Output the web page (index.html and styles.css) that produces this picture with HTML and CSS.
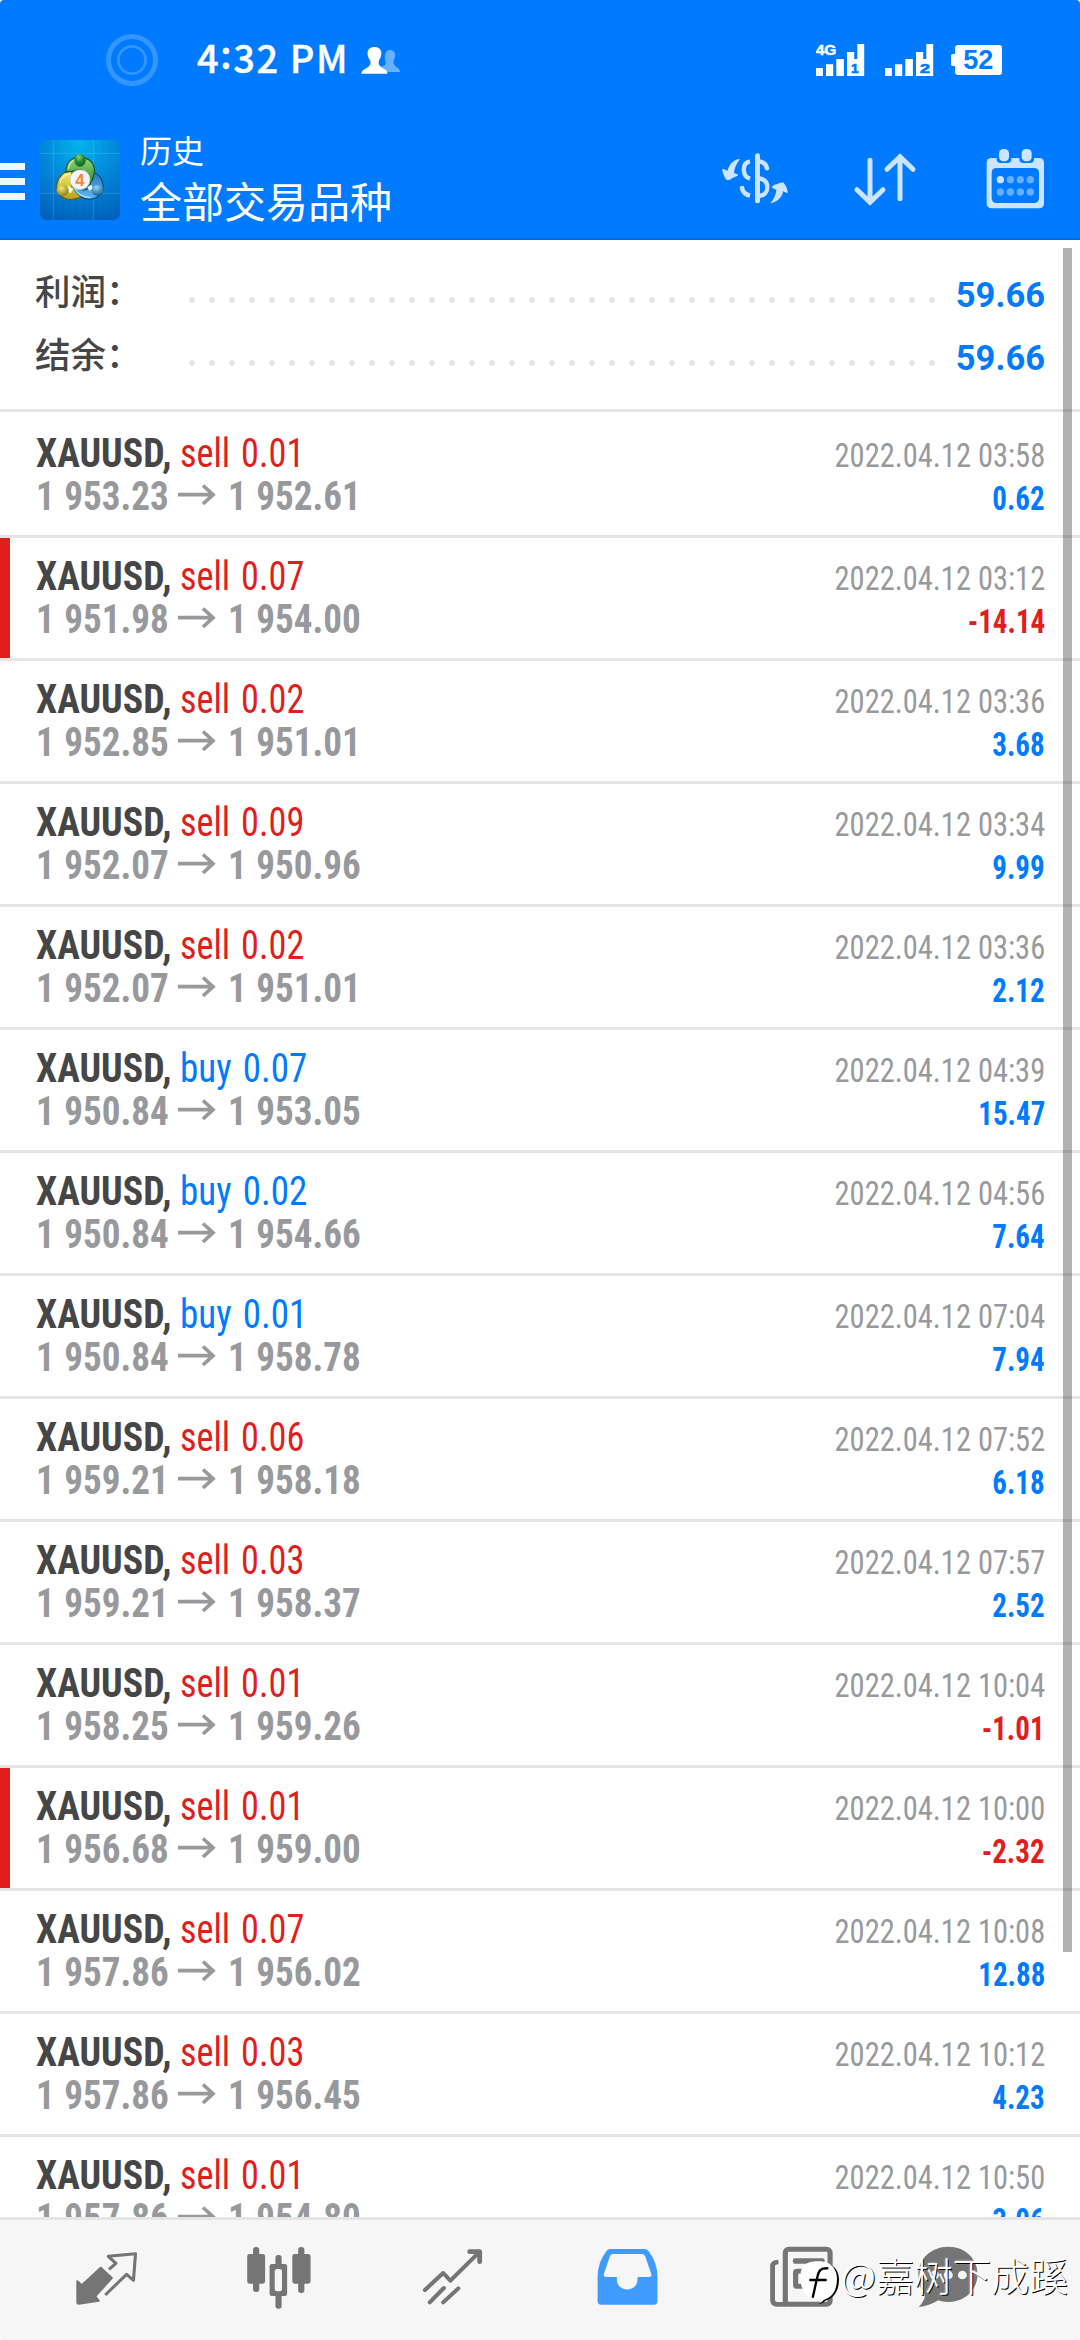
FILE: index.html
```
<!DOCTYPE html>
<html lang="zh-CN">
<head>
<meta charset="utf-8">
<title>历史</title>
<link rel="stylesheet" href="styles.css">
</head>
<body>
<div class="screen">
<header class="header">
  <div class="status">
    <svg class="ring" viewBox="0 0 54 54"><circle cx="27" cy="27" r="23.5" stroke-width="5"/><circle cx="27" cy="27" r="13.6" stroke-width="2.8"/></svg>
    <span class="clock">4<i>:</i>32 PM</span>
    <svg class="people" viewBox="1050 138 116 84" preserveAspectRatio="none">
      <path fill="#66b0ff" d="M1133 150C1143 150 1149 156 1149 165C1149 176 1144 180 1144 188C1145 200 1163 202 1164 216H1104V200C1124 198 1122 192 1121 186C1118 176 1117 150 1133 150Z"/>
      <path fill="#fff" d="M1089 141C1102 141 1109 148 1109 160C1109 173 1102 178 1101 188C1101 205 1126 203 1127 221H1051C1052 203 1078 205 1078 188C1077 178 1069 174 1069 160C1069 148 1076 141 1089 141Z"/>
    </svg>
    <svg class="signal signal-1" viewBox="801 126 142 102" preserveAspectRatio="none">
      <path fill="#fff" d="M801 201h20v24h-20zM830 190h21v35h-21zM860 174h22v51h-22zM891 153h21v21h9V129h20v96h-50z"/>
      <text class="net" x="800" y="162" textLength="60" lengthAdjust="spacingAndGlyphs">4G</text>
      <text class="sim" x="903" y="216" textLength="22" lengthAdjust="spacingAndGlyphs">1</text>
    </svg>
    <svg class="signal signal-2" viewBox="801 126 142 102" preserveAspectRatio="none">
      <path fill="#fff" d="M801 201h20v24h-20zM830 190h21v35h-21zM860 174h22v51h-22zM891 153h21v21h9V129h20v96h-50z"/>
      <text class="sim" x="903" y="216" textLength="29" lengthAdjust="spacingAndGlyphs">2</text>
    </svg>
    <div class="battery">52</div>
  </div>
  <div class="toolbar">
    <div class="menu"><b></b><b></b><b></b></div>
    <svg class="logo" viewBox="120 60 240 240">
      <defs>
        <radialGradient id="bg" cx=".5" cy=".05" r="1"><stop offset="0" stop-color="#02b4ea"/><stop offset=".45" stop-color="#0289dc"/><stop offset="1" stop-color="#0160ba"/></radialGradient>
        <linearGradient id="g" x1="0" y1="0" x2="0" y2="1"><stop offset="0" stop-color="#9ad679"/><stop offset="1" stop-color="#238327"/></linearGradient>
        <linearGradient id="y" x1="0" y1="0" x2="0" y2="1"><stop offset="0" stop-color="#f4ec6a"/><stop offset="1" stop-color="#b4a31a"/></linearGradient>
        <linearGradient id="b" x1="0" y1="0" x2="0" y2="1"><stop offset="0" stop-color="#2678bd"/><stop offset="1" stop-color="#5cbaf0"/></linearGradient>
        <radialGradient id="gh" cx=".4" cy=".25" r=".8"><stop offset="0" stop-color="#8ed27c"/><stop offset=".5" stop-color="#278a34"/><stop offset="1" stop-color="#155c20"/></radialGradient>
        <radialGradient id="yh" cx=".4" cy=".3" r=".8"><stop offset="0" stop-color="#f5ea78"/><stop offset="1" stop-color="#7d6d0a"/></radialGradient>
        <radialGradient id="bh" cx=".4" cy=".25" r=".8"><stop offset="0" stop-color="#8fd4f7"/><stop offset="1" stop-color="#0f578f"/></radialGradient>
      </defs>
      <rect x="120" y="60" width="240" height="240" rx="21" fill="url(#bg)"/>
      <path d="M160 60V300M280 60V300M120 100H360M120 220H360" stroke="#7fdcff" stroke-opacity=".36" stroke-width="2"/>
      <path d="M180 60V300M200 60V300M220 60V300M240 60V300M260 60V300M300 60V300M320 60V300M340 60V300M120 120H360M120 140H360M120 160H360M120 180H360M120 200H360M120 240H360M120 260H360" stroke="#7fdcff" stroke-opacity=".08" stroke-width="2"/>
      <path d="M216 153C178 154 166 190 172 213C186 240 214 244 242 232L228 198L216 200Z" fill="url(#y)" stroke="#6a5c0a" stroke-width="3.5"/>
      <path d="M264 156C298 156 310 180 310 210C298 240 260 244 242 228C228 220 222 210 222 198C246 214 264 214 270 196Z" fill="url(#b)" stroke="#114a7c" stroke-width="3.5"/>
      <path d="M197 156C198 124 218 112 240 112C270 112 288 134 282 162C280 180 272 190 262 198L258 160L242 148L216 154Z" fill="url(#g)" stroke="#145519" stroke-width="3.5"/>
      <path d="M206 145C208 130 216 122 226 119M181 187C184 172 194 164 208 162" fill="none" stroke="#fff" stroke-opacity=".55" stroke-width="4" stroke-linecap="round"/>
      <path d="M203 196L219 208L212 220L203 214ZM262 202L274 194L279 206L268 212Z" fill="#f5faf0"/>
      <path d="M224 206C232 222 250 232 270 232" fill="none" stroke="#a5dcff" stroke-width="4" stroke-linecap="round"/>
      <ellipse cx="240" cy="121" rx="17" ry="19" fill="url(#gh)"/>
      <ellipse cx="188" cy="211" rx="18" ry="17" fill="url(#yh)"/>
      <ellipse cx="293" cy="211" rx="18" ry="17" fill="url(#bh)"/>
      <circle cx="240" cy="179" r="30" fill="#f5f4f5" stroke="#b9c6cf" stroke-width="2"/>
      <text class="four" x="240" y="197" text-anchor="middle">4</text>
    </svg>
    <div class="titles"><div class="t1">历史</div><div class="t2">全部交易品种</div></div>
    <svg class="act currency" viewBox="60 51 210 180" fill="none" stroke="#cce4ff" stroke-width="13">
      <path d="M172.500 77V212.500" stroke-width="15" stroke-linecap="round"/>
      <path d="M150 94C138 96 131.500 106 131.500 119C131.500 132 138 142 150 146"/>
      <path d="M150 197C137 194 128 185 126 174" /><circle cx="126" cy="174" r="7" fill="#cce4ff" stroke="none"/>
      <path d="M178 94C191 96 199 104 201 115"/><circle cx="201" cy="115" r="6.500" fill="#cce4ff" stroke="none"/>
      <path d="M178 145C193 148 202 158 202 172C202 186 193 196 178 198"/>
      <path fill="#cce4ff" stroke="none" d="M120 87C101 88 87 103 83 122L68 116C65 119 69 135 79 149C83 151 86 150 90 149C98 143 108 141 115 136C114 132 108 131 102 129C103 114 110 99 120 87ZM211 220C230 217 247 203 249 184L262 190C265 187 261 170 251 158C247 157 241 157 237 160C230 163 221 164 215 171C217 175 223 177 229 179C228 194 221 208 211 220Z"/>
    </svg>
    <svg class="act sort" viewBox="456 51 198 180" fill="none" stroke="#cce4ff" stroke-width="15" stroke-linecap="round" stroke-linejoin="miter"><path d="M510 91V215M471 179L510 217L549 179M600 206V82M561 118L600 80L639 118"/></svg>
    <svg class="act calendar" viewBox="855 51 186 192">
      <rect x="860" y="84" width="172" height="151" rx="14" fill="#cce4ff"/>
      <rect x="875" y="114" width="142" height="105" rx="14" fill="#007aff"/>
      <path fill="#007aff" d="M890 84H934V88Q934 99 922 99H902Q890 99 890 88ZM958 84H1002V88Q1002 99 990 99H970Q958 99 958 88Z"/>
      <rect x="897" y="57" width="30" height="37" rx="13" fill="#cce4ff"/><rect x="965" y="57" width="30" height="37" rx="13" fill="#cce4ff"/>
      <g fill="#66afff"><circle cx="901" cy="149" r="11" fill="#cce4ff"/><circle cx="931" cy="149" r="11"/><circle cx="961" cy="149" r="11"/><circle cx="991" cy="149" r="11"/><circle cx="901" cy="186" r="11"/><circle cx="931" cy="186" r="11"/><circle cx="961" cy="186" r="11"/><circle cx="991" cy="186" r="11"/></g>
    </svg>
  </div>
</header>
<main class="content">
  <section class="summary">
    <div class="sum"><span class="label">利润：</span><span class="dots"></span><span class="total">59.66</span></div>
    <div class="sum"><span class="label">结余：</span><span class="dots"></span><span class="total">59.66</span></div>
  </section>
  <svg class="defs"><symbol id="arrow" viewBox="0 0 38 22"><path d="M0 10.700H36M25 1.500L35 10.700L25 20" fill="none" stroke="#97999d" stroke-width="3.700"/></symbol></svg>
  <section class="deals">
    <div class="deal"><div class="line"><b class="sym">XAUUSD,</b><span class="sell">sell 0.01</span><time>2022.04.12 03:58</time></div><div class="line"><b class="num">1 953.23</b><svg class="to"><use href="#arrow"/></svg><b class="num">1 952.61</b><span class="profit">0.62</span></div></div>
    <div class="deal stop"><div class="line"><b class="sym">XAUUSD,</b><span class="sell">sell 0.07</span><time>2022.04.12 03:12</time></div><div class="line"><b class="num">1 951.98</b><svg class="to"><use href="#arrow"/></svg><b class="num">1 954.00</b><span class="profit loss">-14.14</span></div></div>
    <div class="deal"><div class="line"><b class="sym">XAUUSD,</b><span class="sell">sell 0.02</span><time>2022.04.12 03:36</time></div><div class="line"><b class="num">1 952.85</b><svg class="to"><use href="#arrow"/></svg><b class="num">1 951.01</b><span class="profit">3.68</span></div></div>
    <div class="deal"><div class="line"><b class="sym">XAUUSD,</b><span class="sell">sell 0.09</span><time>2022.04.12 03:34</time></div><div class="line"><b class="num">1 952.07</b><svg class="to"><use href="#arrow"/></svg><b class="num">1 950.96</b><span class="profit">9.99</span></div></div>
    <div class="deal"><div class="line"><b class="sym">XAUUSD,</b><span class="sell">sell 0.02</span><time>2022.04.12 03:36</time></div><div class="line"><b class="num">1 952.07</b><svg class="to"><use href="#arrow"/></svg><b class="num">1 951.01</b><span class="profit">2.12</span></div></div>
    <div class="deal"><div class="line"><b class="sym">XAUUSD,</b><span class="buy">buy 0.07</span><time>2022.04.12 04:39</time></div><div class="line"><b class="num">1 950.84</b><svg class="to"><use href="#arrow"/></svg><b class="num">1 953.05</b><span class="profit">15.47</span></div></div>
    <div class="deal"><div class="line"><b class="sym">XAUUSD,</b><span class="buy">buy 0.02</span><time>2022.04.12 04:56</time></div><div class="line"><b class="num">1 950.84</b><svg class="to"><use href="#arrow"/></svg><b class="num">1 954.66</b><span class="profit">7.64</span></div></div>
    <div class="deal"><div class="line"><b class="sym">XAUUSD,</b><span class="buy">buy 0.01</span><time>2022.04.12 07:04</time></div><div class="line"><b class="num">1 950.84</b><svg class="to"><use href="#arrow"/></svg><b class="num">1 958.78</b><span class="profit">7.94</span></div></div>
    <div class="deal"><div class="line"><b class="sym">XAUUSD,</b><span class="sell">sell 0.06</span><time>2022.04.12 07:52</time></div><div class="line"><b class="num">1 959.21</b><svg class="to"><use href="#arrow"/></svg><b class="num">1 958.18</b><span class="profit">6.18</span></div></div>
    <div class="deal"><div class="line"><b class="sym">XAUUSD,</b><span class="sell">sell 0.03</span><time>2022.04.12 07:57</time></div><div class="line"><b class="num">1 959.21</b><svg class="to"><use href="#arrow"/></svg><b class="num">1 958.37</b><span class="profit">2.52</span></div></div>
    <div class="deal"><div class="line"><b class="sym">XAUUSD,</b><span class="sell">sell 0.01</span><time>2022.04.12 10:04</time></div><div class="line"><b class="num">1 958.25</b><svg class="to"><use href="#arrow"/></svg><b class="num">1 959.26</b><span class="profit loss">-1.01</span></div></div>
    <div class="deal stop"><div class="line"><b class="sym">XAUUSD,</b><span class="sell">sell 0.01</span><time>2022.04.12 10:00</time></div><div class="line"><b class="num">1 956.68</b><svg class="to"><use href="#arrow"/></svg><b class="num">1 959.00</b><span class="profit loss">-2.32</span></div></div>
    <div class="deal"><div class="line"><b class="sym">XAUUSD,</b><span class="sell">sell 0.07</span><time>2022.04.12 10:08</time></div><div class="line"><b class="num">1 957.86</b><svg class="to"><use href="#arrow"/></svg><b class="num">1 956.02</b><span class="profit">12.88</span></div></div>
    <div class="deal"><div class="line"><b class="sym">XAUUSD,</b><span class="sell">sell 0.03</span><time>2022.04.12 10:12</time></div><div class="line"><b class="num">1 957.86</b><svg class="to"><use href="#arrow"/></svg><b class="num">1 956.45</b><span class="profit">4.23</span></div></div>
    <div class="deal"><div class="line"><b class="sym">XAUUSD,</b><span class="sell">sell 0.01</span><time>2022.04.12 10:50</time></div><div class="line"><b class="num">1 957.86</b><svg class="to"><use href="#arrow"/></svg><b class="num">1 954.80</b><span class="profit">3.06</span></div></div>
  </section>
  <div class="scrollbar"></div>
</main>
<nav class="nav">
  <a><svg viewBox="208.500 372 203.300 210" preserveAspectRatio="none"><path fill="#757575" stroke="#757575" stroke-width="6" stroke-linejoin="round" d="M292 443L324 474L276 529L286 542L228 551Q224 551 224 547V484L237 496Z"/><path fill="none" stroke="#757575" stroke-width="9" d="M316 448L336 430L314 409L393 401L387 481L367 463L305 525" stroke-linejoin="round"/></svg></a>
  <a><svg viewBox="712.600 372 203.300 210" preserveAspectRatio="none"><g fill="#757575"><rect x="719" y="402" width="52" height="89" rx="7"/><rect x="850" y="402" width="53" height="89" rx="7"/><rect x="736" y="381" width="18" height="135" rx="8"/><rect x="867" y="381" width="18" height="138" rx="8"/><rect x="784" y="432" width="51" height="96" rx="7"/><rect x="801" y="405" width="18" height="161" rx="8"/></g><rect x="799" y="447" width="21" height="67" rx="7" fill="#f6f6f6"/></svg></a>
  <a><svg viewBox="1216.800 372 203.300 210" preserveAspectRatio="none"><g fill="none" stroke="#757575" stroke-width="12" stroke-linecap="round" stroke-linejoin="round"><path d="M1234 510L1287 459L1308 482L1388 400"/><path d="M1248 547L1289 504M1287 547L1331 505"/></g><path fill="#757575" d="M1364 388H1393Q1400 388 1400 395V424Q1400 432 1393 432Q1386 432 1386 424V410L1378 402H1364Q1357 402 1357 395Q1357 388 1364 388Z"/></svg></a>
  <a><svg viewBox="152.700 372 203.300 210" preserveAspectRatio="none"><path fill="#409bff" fill-rule="evenodd" d="M202 387H303Q310 387 314 393Q340 427 340 471V543Q340 554 330 554H177Q166 554 166 543V471Q166 427 192 393Q196 387 202 387ZM212 402Q205 402 202 408L185 460Q182 471 190 471H222V480C224 518 280 518 282 480V471H316Q324 471 322 462L304 408Q301 402 294 402Z"/></svg></a>
  <a><svg viewBox="656.900 372 203.300 210" preserveAspectRatio="none"><g fill="none" stroke="#757575" stroke-width="15"><rect x="713" y="388" width="130" height="165" rx="10"/><path d="M693 426Q676 426 676 439V540Q676 553 690 553H718" stroke-width="14"/><rect x="743" y="454" width="34" height="45" rx="4"/></g><g fill="#757575"><rect x="735" y="415" width="92" height="16" rx="6"/><rect x="790" y="447" width="37" height="15" rx="6"/><rect x="790" y="472" width="37" height="13" rx="6"/></g></svg></a>
  <a class="chat"><svg viewBox="1085.500 372 203.300 210" preserveAspectRatio="none"><path fill="#757575" d="M1185 380C1234 380 1270 416 1270 462C1270 510 1234 546 1185 546C1173 546 1165 544 1156 541C1138 552 1120 560 1099 561C1108 551 1117 540 1117 525C1104 508 1098 486 1098 464C1098 416 1136 380 1185 380Z"/><g fill="#f6f6f6"><circle cx="1145" cy="465" r="13"/><circle cx="1185" cy="465" r="13"/><circle cx="1226" cy="465" r="13"/></g></svg></a>
</nav>
<div class="watermark">
  <svg viewBox="60 296 120 140"><path fill="#000" d="M110 307C160 302 177 330 177 358C177 390 162 413 139 420C132 423 129 432 118 430L124 409H112C72 409 67 386 67 354C67 322 80 310 110 307Z"/><path fill="#fff" d="M107 303C154 298 171 328 171 354C171 388 158 410 137 416C130 418 127 426 119 428L121 418C80 418 61 390 61 350C61 318 76 306 107 303Z"/><path fill="none" stroke="#000" stroke-width="7" d="M145 324C123 322 116 330 112 350L98 412M88 359H140"/></svg>
  <span>@嘉树下成蹊</span>
</div>
</div>
</body>
</html>
```
FILE: styles.css
```
* { box-sizing: border-box; }
body { margin: 0; background: #fff; }
.screen { position: relative; width: 1080px; height: 2340px; display: flex; flex-direction: column; overflow: hidden; background: #fff; border-radius: 4px; font-family: "Roboto Condensed", "Noto Sans CJK SC", sans-serif; }
svg { display: block; flex: none; }
.defs { width: 0; height: 0; position: absolute; }

.header { height: 240px; flex: none; background: #007aff; border-bottom: 2px solid #006fe6; }
.status { height: 120px; display: flex; align-items: center; padding-left: 105px; }
.ring { width: 54px; height: 54px; fill: none; stroke: #3395ff; }
.clock { margin: -6px 0 0 38px; width: 164px; white-space: nowrap; color: #fff; font: 500 38px/60px "Noto Sans CJK SC", sans-serif; letter-spacing: 1.6px; -webkit-text-stroke: .4px #fff; }
.clock i { font-style: normal; position: relative; top: -4px; }
.people { width: 40px; height: 28px; }
.signal { width: 48.900px; height: 34px; }
.signal-1 { margin-left: 415px; }
.signal-2 { margin-left: 20px; }
.net { font: bold 43px "Liberation Sans", sans-serif; fill: #fff; stroke: #fff; stroke-width: 1.500px; }
.sim { font: bold 37px "Liberation Sans", sans-serif; fill: #007aff; stroke: #007aff; stroke-width: 2px; }
.battery { position: relative; margin-left: 21px; width: 47px; height: 30px; border-radius: 3px; background: #fff; color: #007aff; font: bold 27px/31px "Liberation Sans", sans-serif; text-align: center; }
.battery::before { content: ""; position: absolute; left: -4px; top: 9px; width: 5px; height: 12px; border-radius: 2px 0 0 2px; background: #fff; }

.toolbar { height: 118px; display: flex; align-items: flex-start; }
.menu { width: 25px; margin-top: 43px; display: flex; flex-direction: column; gap: 8px; }
.menu b { height: 7px; background: #eff6ff; }
.logo { width: 80px; height: 80px; margin: 20px 0 0 15px; }
.four { font: bold 50px "Liberation Sans", sans-serif; fill: #f0883a; }
.titles { margin: 9px 0 0 20px; width: 580px; color: #fff; font-family: "Noto Sans CJK SC", sans-serif; }
.t1 { font-size: 32px; line-height: 40px; }
.t2 { font-size: 42px; line-height: 62px; }
.act { margin-top: 27px; height: 60px; }
.currency { width: 70px; }
.sort { width: 66px; margin-left: 62px; }
.calendar { width: 62px; height: 64px; margin-left: 67px; }

.content { position: relative; flex: 1; min-height: 0; overflow: hidden; }
.summary { height: 172px; padding: 22px 35px 0; border-bottom: 3px solid #e5e5e5; }
.sum { height: 63px; display: flex; align-items: center; }
.label { width: 147px; margin-top: -8px; color: #464646; font: 500 35.500px/60px "Noto Sans CJK SC", sans-serif; }
.dots { width: 760px; height: 6px; margin-top: 12px; background: radial-gradient(circle at center, #e5e5e5 2.700px, transparent 3.300px) 0 0 / 20px 6px; }
.total { flex: 1; margin-top: 2px; text-align: right; color: #007aff; font: 700 34.500px/60px Roboto, sans-serif; }

.deals { padding-top: 3px; }
.deal { height: 123px; padding: 17px 35px 0 35.500px; border-bottom: 3px solid #e5e5e5; }
.stop { box-shadow: inset 10px 0 #e21d1d; }
.line { height: 43px; display: flex; align-items: baseline; font-size: 40px; line-height: 43px; white-space: nowrap; }
.line > * { transform-origin: 0 50%; }
.sym { width: 144.700px; color: #464646; transform: scaleX(.947); }
.sell { color: #e21d1d; transform: scaleX(.905); word-spacing: 3px; }
.buy { color: #007aff; transform: scaleX(.925); word-spacing: 3px; }
.num { width: 142.900px; color: #97999d; transform: scaleX(.927); word-spacing: 1px; }
.to { align-self: flex-start; width: 38px; height: 22px; margin: 9px 11.200px 0 0; }
.line time { margin-left: auto; color: #97999d; font-size: 33px; line-height: 40px; transform: scaleX(.923); transform-origin: 100% 50%; }
.line .profit { margin-left: auto; color: #007aff; font-size: 33px; line-height: 40px; font-weight: 700; transform: scaleX(.878); transform-origin: 100% 50%; }
.line .loss { color: #e21d1d; }
.scrollbar { position: absolute; top: 8px; left: 1063px; width: 9px; height: 1704px; background: rgba(0, 0, 0, .3); }

.nav { flex: none; height: 123px; padding: 24px 0 0 20px; display: flex; background: #f6f6f6; border-top: 3px solid #e5e5e5; }
.nav a { width: 173.600px; display: flex; justify-content: center; }
.nav .chat { width: 121.600px; }
.nav svg { width: 70px; height: 70px; }

.watermark { position: absolute; left: 800px; top: 2250px; display: flex; align-items: flex-start; color: #fff; }
.watermark svg { width: 40px; height: 46.700px; margin-top: 9px; }
.watermark span { margin: -3px 0 0 1px; font: 300 38.400px/54px "Noto Sans CJK SC", sans-serif; white-space: nowrap; text-shadow: 1px 1px 0 #000, 0 0 2px #fff; }
```
